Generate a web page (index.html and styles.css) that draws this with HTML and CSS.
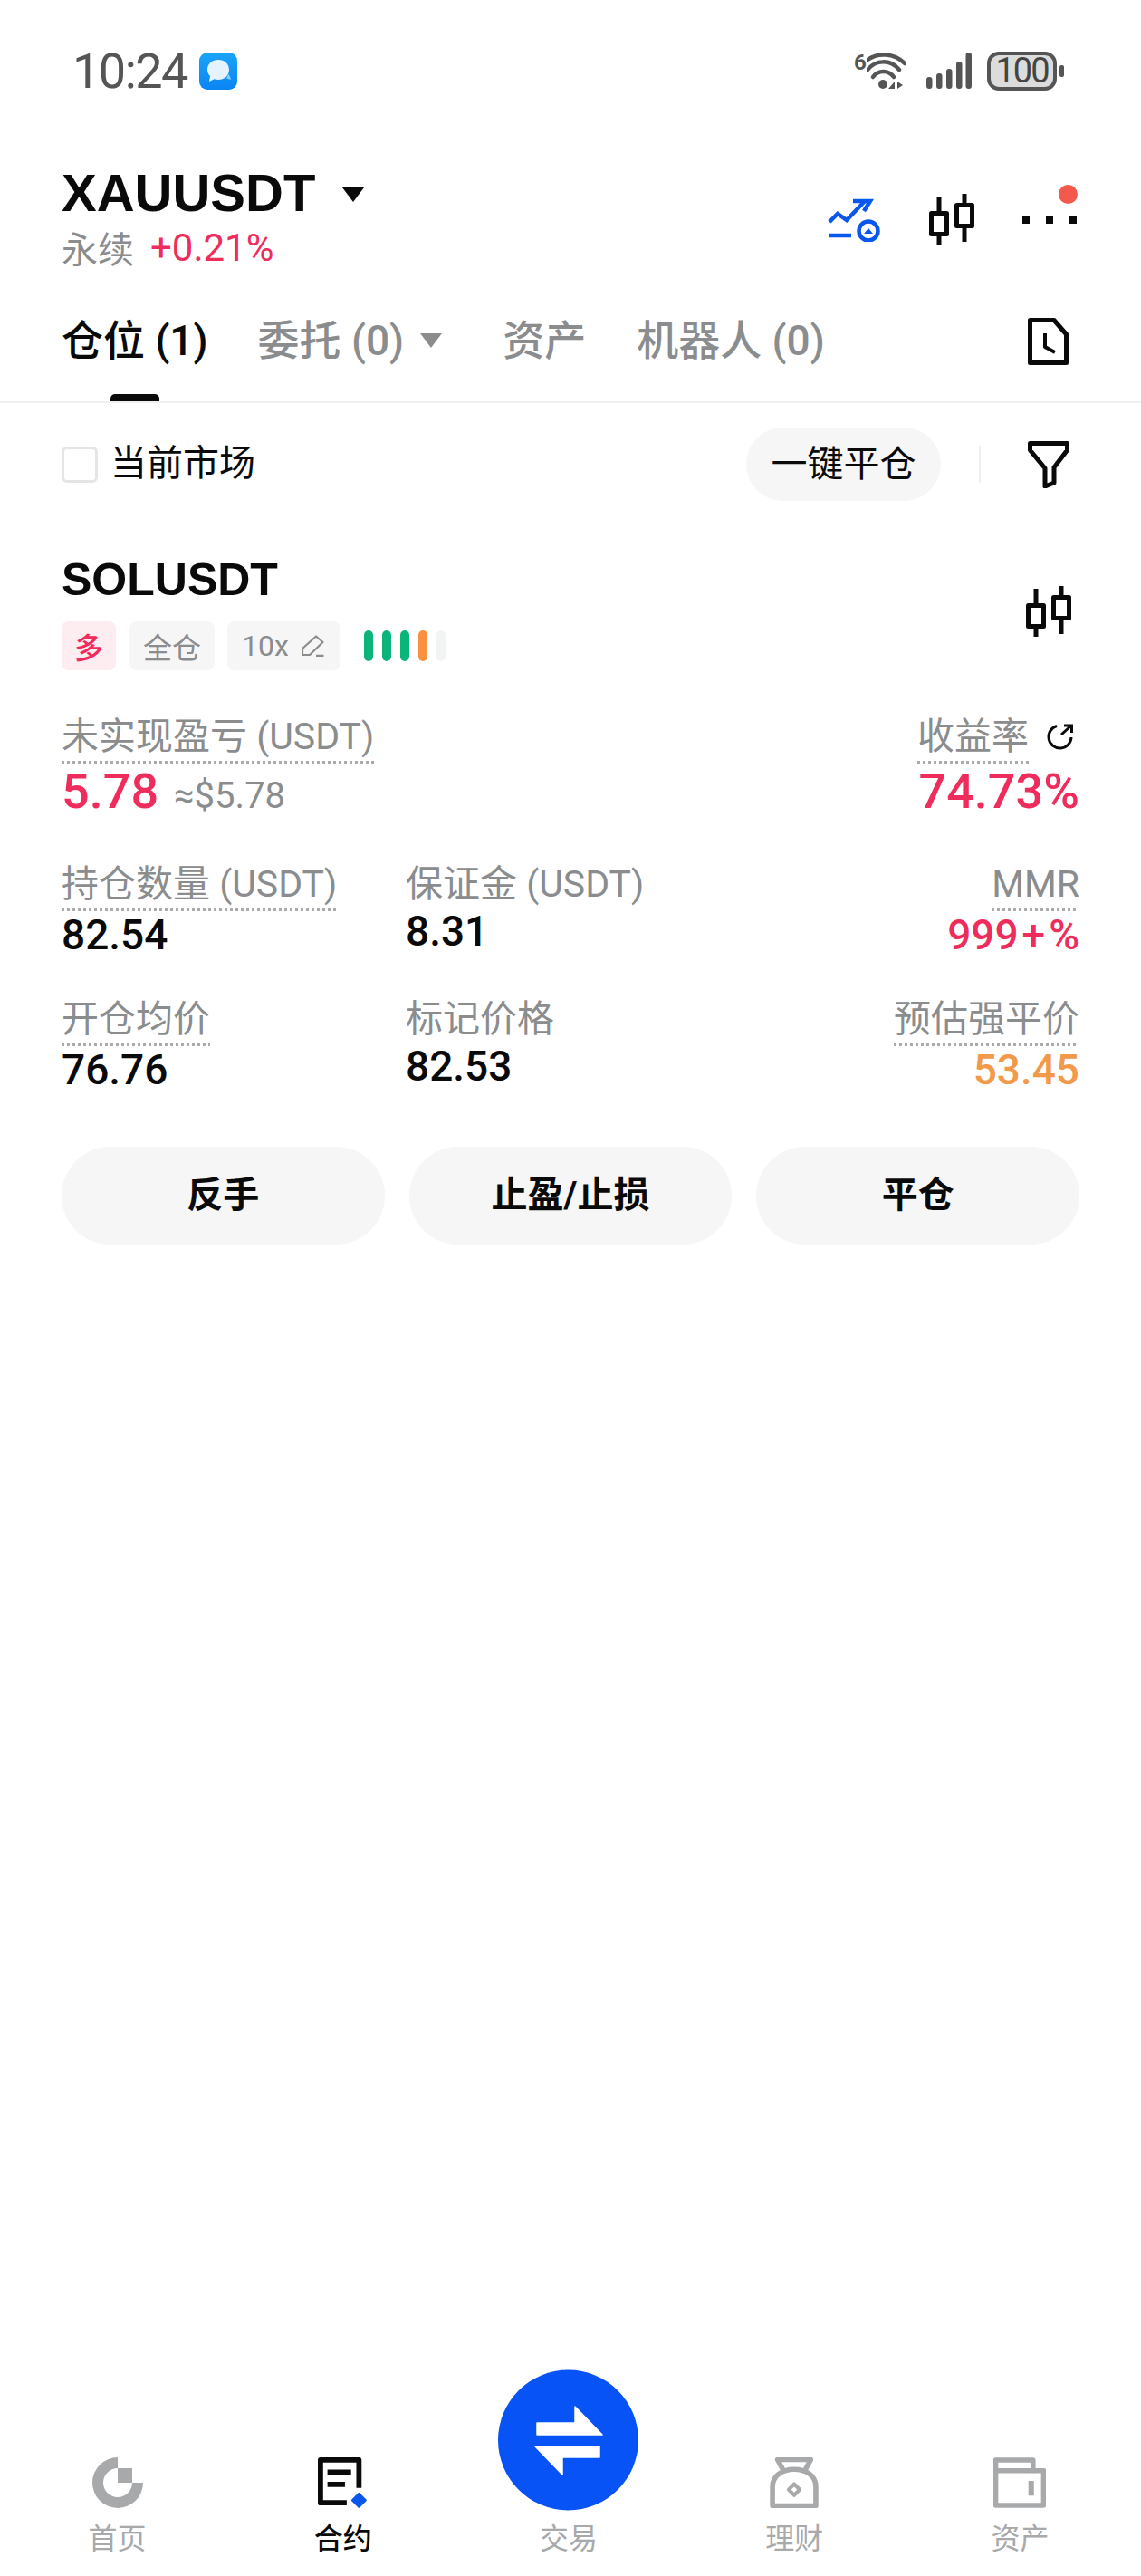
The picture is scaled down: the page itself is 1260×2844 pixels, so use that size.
FILE: index.html
```html
<!DOCTYPE html>
<html lang="zh">
<head>
<meta charset="utf-8">
<title>XAUUSDT</title>
<link rel="stylesheet" href="styles.css">
</head>
<body>
<div class="page">
  <header class="status">
    <div class="status-left">
      <span class="time">10:24</span>
      <svg class="app-icon" viewBox="0 0 42 41">
        <defs><linearGradient id="appg" x1="0" y1="0" x2="0" y2="1"><stop offset="0" stop-color="#1aa5f7"/><stop offset="1" stop-color="#0b84f5"/></linearGradient></defs>
        <rect width="42" height="41" rx="9" fill="url(#appg)"/>
        <path d="M21 8c7 0 12 4.500 12 11s-5 11-12 11c-1.500 0-3-.2-4.300-.7L11 32l1-6c-2-2-3-4.300-3-7 0-6.500 5-11 12-11z" fill="#e4f3fd"/>
        <path d="M32 24c2 1 2.500 4 3 6l-5-1.500z" fill="#7fc8f8"/>
      </svg>
    </div>
    <div class="status-right">
      <span class="wifi-six">6</span>
      <svg class="wifi" viewBox="0 0 43 40" fill="none" stroke="#555" stroke-width="4.500" stroke-linecap="round">
        <path d="M1 8C12 0 30 0 42 12"/>
        <path d="M1 19C10 8 26 7 36 19"/>
        <path d="M7 27c6-8 17-8 23 0"/>
        <circle cx="18" cy="35" r="5" fill="#555" stroke="none"/>
        <path d="M31 32v8h-7zM34 32v8l6-4z" fill="#555" stroke="none"/>
      </svg>
      <svg class="signal" viewBox="0 0 50 40" fill="#555">
        <rect x="0" y="27" width="6.500" height="13" rx="3"/>
        <rect x="11" y="23" width="6.500" height="17" rx="3"/>
        <rect x="22" y="18" width="6.500" height="22" rx="3"/>
        <rect x="33" y="10" width="6.500" height="30" rx="3"/>
        <rect x="43.500" y="0" width="6.500" height="40" rx="3"/>
      </svg>
      <span class="battery">100</span>
      <span class="battery-cap"></span>
    </div>
  </header>

  <section class="head">
    <div class="head-title">
      <div class="symbol-row"><span class="symbol">XAUUSDT</span><span class="caret caret-dark"></span></div>
      <div class="sub-row"><span class="sub-type">永续</span><span class="sub-change">+0.21%</span></div>
    </div>
    <div class="head-tools">
      <svg class="tool-trend" viewBox="0 0 58 48" fill="none" stroke="#0a57ee" stroke-width="4.500">
        <path d="M2 26l9-9 10 7 20-21"/>
        <path d="M28 3h19l-7 11" />
        <path d="M1 41h25"/>
        <circle cx="45" cy="36" r="10.500"/>
        <path d="M40 39l5-6 5 6z" fill="#0a57ee" stroke="none"/>
      </svg>
      <svg class="candles" viewBox="0 0 50 57" fill="none" stroke="#0a0a0a" stroke-width="5" stroke-linejoin="round">
        <rect x="2.500" y="21.500" width="17" height="23"/>
        <path d="M11 3v18M11 45v11"/>
        <rect x="30.500" y="12.500" width="17" height="23"/>
        <path d="M39 0v12M39 36v17"/>
      </svg>
      <div class="more">
        <span class="more-dot"></span><span class="more-dot"></span><span class="more-dot"></span>
        <span class="more-badge"></span>
      </div>
    </div>
  </section>

  <nav class="tabs">
    <span class="tab tab-active">仓位 (1)</span>
    <span class="tab tab-orders">委托 (0)<span class="caret caret-gray"></span></span>
    <span class="tab tab-assets">资产</span>
    <span class="tab tab-bots">机器人 (0)</span>
    <svg class="doc-icon" viewBox="0 0 45 52" fill="none" stroke="#0a0a0a" stroke-width="5" stroke-linejoin="round">
      <path d="M2.500 2.500H29L42.500 18V49.500H2.500Z"/>
      <path d="M19 17V32L30 38" stroke-width="4"/>
    </svg>
  </nav>

  <section class="filter">
    <span class="checkbox"></span>
    <span class="filter-label">当前市场</span>
    <span class="close-all">一键平仓</span>
    <span class="filter-sep"></span>
    <svg class="filter-icon" viewBox="0 0 46 52" fill="none" stroke="#0a0a0a" stroke-width="5" stroke-linejoin="round">
      <path d="M2.500 2.500H43.500V10L29 29V46L19 50V30L2.500 10Z"/>
    </svg>
  </section>

  <main class="card">
    <div class="card-head">
      <div>
        <div class="card-name">SOLUSDT</div>
        <div class="tags">
          <span class="tag tag-long">多</span>
          <span class="tag">全仓</span>
          <span class="tag tag-lev">10x
            <svg class="pencil" viewBox="0 0 25 24" fill="none" stroke="#8a8c8e" stroke-width="2.200" stroke-linejoin="round">
              <path d="M1 22V15L16 1.500L23.500 8L9 22ZM16 22.800H24.500"/>
            </svg>
          </span>
          <div class="risk">
            <span class="risk-bar risk-green"></span>
            <span class="risk-bar risk-green"></span>
            <span class="risk-bar risk-green"></span>
            <span class="risk-bar risk-orange"></span>
            <span class="risk-bar risk-empty"></span>
          </div>
        </div>
      </div>
      <svg class="candles candles-card" viewBox="0 0 50 57" fill="none" stroke="#0a0a0a" stroke-width="5" stroke-linejoin="round">
        <rect x="2.500" y="21.500" width="17" height="23"/>
        <path d="M11 3v18M11 45v11"/>
        <rect x="30.500" y="12.500" width="17" height="23"/>
        <path d="M39 0v12M39 36v17"/>
      </svg>
    </div>

    <div class="stats">
      <div class="stat stat-wide">
        <span class="label dotted">未实现盈亏 (USDT)</span>
        <div class="big"><span class="red">5.78</span><span class="approx">≈$5.78</span></div>
      </div>
      <div class="stat stat-right">
        <div class="label-row">
          <span class="label dotted">收益率</span>
          <svg class="share" viewBox="0 0 31 30" fill="none" stroke="#0a0a0a" stroke-width="3">
            <path d="M12 3.500A12.500 12.500 0 1 0 28 16"/>
            <path d="M17 13L28 3M20 3H28.500V11"/>
          </svg>
        </div>
        <div class="big red">74.73%</div>
      </div>

      <div class="stat">
        <span class="label dotted">持仓数量 (USDT)</span>
        <div class="value">82.54</div>
      </div>
      <div class="stat">
        <span class="label">保证金 (USDT)</span>
        <div class="value">8.31</div>
      </div>
      <div class="stat stat-right">
        <span class="label dotted">MMR</span>
        <div class="value red">999<span class="plus">+</span>%</div>
      </div>

      <div class="stat">
        <span class="label dotted">开仓均价</span>
        <div class="value">76.76</div>
      </div>
      <div class="stat">
        <span class="label">标记价格</span>
        <div class="value">82.53</div>
      </div>
      <div class="stat stat-right">
        <span class="label dotted">预估强平价</span>
        <div class="value orange">53.45</div>
      </div>
    </div>

    <div class="actions">
      <span class="action">反手</span>
      <span class="action">止盈/止损</span>
      <span class="action">平仓</span>
    </div>
  </main>

  <footer class="nav">
    <div class="nav-item">
      <svg class="nav-icon" viewBox="0 0 58 56" fill="#a7a9ab">
        <path d="M29 0A28 28 0 1 0 57 28H45A16 16 0 1 1 29 12Z"/>
        <rect x="29" y="12" width="16" height="16"/>
      </svg>
      <span>首页</span>
    </div>
    <div class="nav-item nav-active">
      <svg class="nav-icon" viewBox="0 0 58 58" fill="none" stroke="#0a0a0a" stroke-width="6">
        <path d="M33 52H3V3H47V35" stroke-linejoin="round"/>
        <path d="M11 17H38M11 31H31"/>
        <path d="M47 41.500L54.500 49L47 56.500L39.500 49Z" fill="#0a57ee" stroke="#0a57ee" stroke-width="2.500" stroke-linejoin="round"/>
      </svg>
      <span>合约</span>
    </div>
    <div class="nav-item nav-center">
      <svg class="nav-trade" viewBox="0 0 155 156">
        <circle cx="77.500" cy="78" r="77.500" fill="#0753f5"/>
        <path d="M43 59H85V41L115 72H43ZM41 85H112V97H71V116Z" fill="#fff" stroke="#fff" stroke-width="1.500" stroke-linejoin="round"/>
      </svg>
      <span>交易</span>
    </div>
    <div class="nav-item">
      <svg class="nav-icon" viewBox="0 0 52 55" fill="none" stroke="#a7a9ab" stroke-width="5.500" stroke-linejoin="round">
        <path d="M2.500 52.500H49.500V32C49.500 20 39 13 26 13C13 13 2.500 20 2.500 32Z"/>
        <path d="M14 13.500L8 2.500H44L38 13.500"/>
        <path d="M26 29L32 35L26 41L20 35Z" stroke-width="4"/>
      </svg>
      <span>理财</span>
    </div>
    <div class="nav-item">
      <svg class="nav-icon" viewBox="0 0 57 54" fill="none" stroke="#a7a9ab" stroke-width="5.500" stroke-linejoin="round">
        <path d="M2.500 51.500V2.500H43V14H54.500V51.500Z"/>
        <path d="M2.500 14H43"/>
        <path d="M41 25V41" stroke-width="6"/>
      </svg>
      <span>资产</span>
    </div>
  </footer>
</div>
</body>
</html>
```

FILE: styles.css
```css
* { box-sizing: border-box; }
html, body { margin: 0; padding: 0; background: #fff; }
body {
  font-family: Roboto, "Noto Sans CJK SC", sans-serif;
  color: #0a0a0a;
}
.page {
  width: 1260px;
  height: 2844px;
  display: flex;
  flex-direction: column;
  overflow: hidden;
}

/* status bar */
.status {
  height: 156px;
  padding: 0 85px 0 80px;
  display: flex;
  justify-content: space-between;
  align-items: center;
}
.status-left { display: flex; align-items: center; gap: 13px; }
.time { font-size: 54px; line-height: 60px; color: #555; letter-spacing: -1.5px; padding-top: 2px; }
.app-icon { width: 42px; height: 41px; }
.status-right { display: flex; align-items: center; }
.wifi-six { font-size: 24px; line-height: 24px; font-weight: 700; color: #555; align-self: flex-start; width: 14px; margin-right: 0; }
.wifi { width: 43px; height: 40px; }
.signal { width: 50px; height: 40px; margin-left: 23px; }
.battery {
  width: 77px;
  height: 43px;
  margin-left: 17px;
  border: 4px solid #555;
  border-radius: 13px;
  background: #dcdcdc;
  color: #444;
  font-size: 38px;
  line-height: 35px;
  letter-spacing: -2px;
  text-align: center;
}
.battery-cap { width: 5px; height: 13px; margin-left: 3px; background: #555; border-radius: 2px; }

/* header */
.head {
  height: 174px;
  padding: 24px 71px 0 68px;
  display: flex;
  justify-content: space-between;
}
.symbol-row { display: flex; align-items: center; height: 66px; }
.symbol { font-family: "Liberation Sans", sans-serif; font-weight: 700; font-size: 58px; line-height: 66px; }
.caret { display: inline-block; width: 0; height: 0; border-left: 12px solid transparent; border-right: 12px solid transparent; border-top: 16px solid #0a0a0a; }
.caret-dark { margin-left: 30px; margin-top: 4px; }
.caret-gray { border-top-color: #8a8c8e; margin-left: 18px; }
.sub-row { display: flex; align-items: center; height: 48px; margin-top: 3px; }
.sub-type { font-size: 40px; color: #8a8c8e; }
.sub-change { font-size: 42px; color: #ee2d5c; margin-left: 18px; }
.head-tools { display: flex; align-items: flex-start; padding-top: 34px; }
.tool-trend { width: 58px; height: 48px; margin-top: 5px; }
.candles { width: 50px; height: 57px; }
.head-tools .candles { margin-left: 54px; }
.more { position: relative; display: flex; gap: 18px; margin-left: 53px; padding-top: 24px; }
.more-dot { width: 8px; height: 9px; background: #0a0a0a; }
.more-badge { position: absolute; right: -1px; top: -10px; width: 21px; height: 21px; border-radius: 50%; background: #f4594e; }

/* tabs */
.tabs {
  height: 115px;
  padding: 16px 80px 0 68px;
  display: flex;
  align-items: flex-start;
  border-bottom: 2px solid #efefef;
  font-size: 46px;
  line-height: 60px;
  color: #8a8c8e;
  font-weight: 500;
}
.tab { display: inline-flex; align-items: center; white-space: pre; }
.tab-active { color: #0a0a0a; position: relative; }
.tab-active::after {
  content: "";
  position: absolute;
  left: 54px;
  top: 89px;
  width: 54px;
  height: 8px;
  border-radius: 5px 5px 0 0;
  background: #0a0a0a;
}
.tab-orders { margin-left: 55px; }
.tab-assets { margin-left: 67px; }
.tab-bots { margin-left: 56px; }
.doc-icon { width: 45px; height: 52px; margin-left: auto; margin-top: 5px; }

/* filter */
.filter {
  height: 135px;
  padding: 0 79px 0 68px;
  display: flex;
  align-items: center;
}
.checkbox { width: 40px; height: 40px; border: 3px solid #e5e5e5; border-radius: 6px; }
.filter-label { font-size: 40px; line-height: 44px; margin-left: 14px; padding-bottom: 2px; }
.close-all {
  margin-left: auto;
  width: 215px;
  height: 81px;
  border-radius: 41px;
  background: #f6f6f6;
  font-size: 40px;
  line-height: 81px;
  text-align: center;
}
.filter-sep { width: 2px; height: 41px; margin-left: 42px; background: #f0f0f0; }
.filter-icon { width: 46px; height: 52px; margin-left: 52px; }

/* card */
.card { flex: 1; padding: 30px 68px 0; }
.card-head { display: flex; justify-content: space-between; align-items: center; padding-right: 9px; }
.card-name { font-family: "Liberation Sans", sans-serif; font-weight: 700; font-size: 50px; line-height: 60px; }
.tags { display: flex; align-items: center; margin-top: 16px; }
.tag {
  height: 54px;
  padding: 0 15px;
  margin-right: 14px;
  display: flex;
  align-items: center;
  background: #f6f6f6;
  border-radius: 8px;
  font-size: 32px;
  color: #8a8c8e;
}
.tag-long { background: #fdecf0; color: #ee2d5c; margin-right: 15px; padding: 0 14px; font-weight: 500; }
.tag-lev { padding: 0 18px 0 16px; gap: 14px; margin-right: 0; }
.pencil { width: 25px; height: 24px; }
.risk { display: flex; gap: 10px; margin-left: 26px; }
.risk-bar { width: 10px; height: 34px; border-radius: 5px; }
.risk-green { background: #0bb57a; }
.risk-orange { background: #fa9141; }
.risk-empty { background: #f2f3f3; }
.candles-card { display: block; }

.stats {
  margin-top: 51px;
  display: grid;
  grid-template-columns: 380px 1fr auto;
  row-gap: 41px;
}
.stat { display: flex; flex-direction: column; align-items: flex-start; }
.stat-wide { grid-column: 1 / span 2; }
.stat-right { align-items: flex-end; }
.label {
  font-size: 41px;
  line-height: 44px;
  color: #8a8c8e;
  padding-bottom: 4px;
  white-space: nowrap;
}
.dotted {
  padding-bottom: 8px;
  background: repeating-linear-gradient(90deg, #a9abad 0 3px, transparent 3px 6px) left bottom / 100% 3px no-repeat;
}
.label-row { display: flex; align-items: flex-start; }
.share { width: 31px; height: 30px; margin: 7px 6px 0 19px; }
.big { font-size: 54px; line-height: 62px; font-weight: 500; white-space: nowrap; margin-bottom: 3px; }
.approx { font-size: 40px; font-weight: 400; color: #8a8c8e; margin-left: 17px; }
.value { font-size: 46px; line-height: 60px; font-weight: 500; margin-top: -4px; }
.plus { margin: 0 4px; }
.red { color: #ee2d5c; }
.orange { color: #f2994a; }

.actions { display: flex; gap: 27px; margin-top: 55px; }
.action {
  flex: 1;
  height: 108px;
  border-radius: 54px;
  background: #f6f6f6;
  font-size: 40px;
  font-weight: 700;
  line-height: 108px;
  text-align: center;
}

/* bottom nav */
.nav {
  padding: 0 9px 21px 5px;
  display: grid;
  grid-template-columns: repeat(5, 1fr);
  align-items: end;
}
.nav-item {
  display: flex;
  flex-direction: column;
  align-items: center;
  gap: 14px;
  font-size: 32px;
  line-height: 40px;
  color: #a7a9ab;
}
.nav-active { color: #0a0a0a; font-weight: 500; }
.nav-center { gap: 11px; }
.nav-icon { height: 56px; width: 58px; }
.nav-trade { width: 155px; height: 156px; }
```
